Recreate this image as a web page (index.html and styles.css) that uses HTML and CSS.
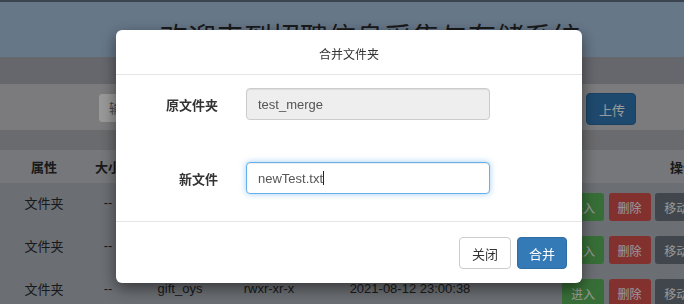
FILE: index.html
```html
<!DOCTYPE html>
<html lang="zh-CN">
<head>
    <meta charset="UTF-8">
    <meta name="viewport" content="width=device-width, initial-scale=1.0">
    <title>文件管理</title>
    <link rel="stylesheet" href="styles.css">
</head>
<body>
    <div class="top-line"></div>
    <div class="banner">
        <h1>欢迎来到招聘信息采集与存储系统</h1>
    </div>
    <div class="nav-band"></div>
    <div class="toolbar">
        <input type="text" class="search-input" placeholder="输入文件夹名称">
        <button type="button" class="btn btn-primary upload-btn">上传</button>
    </div>
    <div class="spacer"></div>
    <table class="file-table">
        <colgroup>
            <col style="width: 88px">
            <col style="width: 40px">
            <col style="width: 104px">
            <col style="width: 74px">
            <col style="width: 208px">
            <col style="width: 338px">
        </colgroup>
        <thead>
            <tr>
                <th>属性</th>
                <th>大小</th>
                <th>名称</th>
                <th>权限</th>
                <th>修改时间</th>
                <th>操作</th>
            </tr>
        </thead>
        <tbody>
            <tr>
                <td>文件夹</td>
                <td>--</td>
                <td>test_merge</td>
                <td>rwxr-xr-x</td>
                <td>2021-08-12 22:58:14</td>
                <td class="ops">
                    <button type="button" class="btn-sm btn-success">进入</button>
                    <button type="button" class="btn-sm btn-danger">删除</button>
                    <button type="button" class="btn-sm btn-secondary">移动</button>
                </td>
            </tr>
            <tr>
                <td>文件夹</td>
                <td>--</td>
                <td>data_2021</td>
                <td>rwxr-xr-x</td>
                <td>2021-08-12 22:59:40</td>
                <td class="ops">
                    <button type="button" class="btn-sm btn-success">进入</button>
                    <button type="button" class="btn-sm btn-danger">删除</button>
                    <button type="button" class="btn-sm btn-secondary">移动</button>
                </td>
            </tr>
            <tr>
                <td>文件夹</td>
                <td>--</td>
                <td>gift_oys</td>
                <td>rwxr-xr-x</td>
                <td>2021-08-12 23:00:38</td>
                <td class="ops">
                    <button type="button" class="btn-sm btn-success">进入</button>
                    <button type="button" class="btn-sm btn-danger">删除</button>
                    <button type="button" class="btn-sm btn-secondary">移动</button>
                </td>
            </tr>
        </tbody>
    </table>

    <div class="backdrop"></div>
    <div class="modal">
        <div class="modal-dialog">
            <div class="modal-header">
                <h4 class="modal-title">合并文件夹</h4>
            </div>
            <div class="modal-body">
                <div class="form-row">
                    <label for="old-name">原文件夹</label>
                    <input type="text" id="old-name" class="form-control" value="test_merge" readonly>
                </div>
                <div class="form-row">
                    <label for="new-name">新文件</label>
                    <div class="input-wrap">
                        <input type="text" id="new-name" class="form-control focused" value="newTest.txt">
                        <span class="caret"></span>
                    </div>
                </div>
            </div>
            <div class="modal-footer">
                <button type="button" class="btn btn-default">关闭</button>
                <button type="button" class="btn btn-primary">合并</button>
            </div>
        </div>
    </div>
</body>
</html>
```

FILE: styles.css
```css
/* page under the dialog */
html, body {
    margin: 0;
    padding: 0;
    height: 100%;
    overflow: hidden;
}
body {
    font-family: "Liberation Sans", "Noto Sans CJK SC", sans-serif;
    font-size: 13px;
    color: #2b2b2b;
    background-color: #b2b7be;
}
.top-line {
    height: 2px;
    background-color: #617185;
}
.banner {
    height: 55px;
    background-color: #aac6e3;
    box-sizing: border-box;
    padding: 19px 0 0 56px;
    text-align: center;
}
.banner h1 {
    margin: 0;
    font-size: 28px;
    line-height: 36px;
    font-weight: normal;
    color: #2b2b2b;
    white-space: nowrap;
}
.nav-band {
    height: 27px;
    background-color: #aaacb6;
}
.toolbar {
    height: 46px;
    box-sizing: border-box;
    padding: 9px 0 0 98px;
    display: flex;
    align-items: flex-start;
    background-color: #cdcdd2;
}
.search-input {
    width: 460px;
    height: 30px;
    box-sizing: border-box;
    padding: 0 10px;
    border: 1px solid #ccc;
    border-radius: 4px;
    font-family: inherit;
    font-size: 13px;
}
.upload-btn {
    margin-left: 28px;
    width: 50px;
    height: 30px;
    padding: 0;
    white-space: nowrap;
}
.spacer {
    height: 20px;
    background-color: #b1b2b7;
}
.file-table {
    width: 852px;
    table-layout: fixed;
    border-collapse: collapse;
}
.file-table th {
    height: 33px;
    padding: 0;
    font-weight: bold;
    background-color: #c3c6cb;
    white-space: nowrap;
}
.file-table td {
    height: 38px;
    padding: 0 0 5px;
    text-align: center;
    white-space: nowrap;
}
.file-table td.ops {
    text-align: left;
    padding: 5px 0 0 48px;
}
.btn-sm {
    width: 42px;
    height: 28px;
    margin-right: 1px;
    border: none;
    border-radius: 3px;
    color: #fff;
    font-family: inherit;
    font-size: 12px;
    vertical-align: middle;
}
.btn-success {
    background-color: #5cb85c;
}
.btn-danger {
    background-color: #d9534f;
}
.btn-secondary {
    background-color: #6c757d;
}

/* dialog */
.backdrop {
    position: fixed;
    top: 0;
    left: 0;
    right: 0;
    bottom: 0;
    background-color: rgba(0, 0, 0, 0.4);
}
.modal {
    position: fixed;
    top: 0;
    left: 0;
    right: 0;
    bottom: 0;
}
.modal-dialog {
    width: 466px;
    margin: 30px 0 0 116px;
    background-color: #fff;
    border-radius: 6px;
    box-shadow: 0 5px 15px rgba(0, 0, 0, 0.5);
}
.modal-header {
    padding: 18px 15px 12px;
    border-bottom: 1px solid #e5e5e5;
    text-align: center;
}
.modal-title {
    margin: 0;
    font-size: 12px;
    line-height: 14px;
    font-weight: normal;
    color: #333;
}
.modal-body {
    padding: 13px 0 27px;
    display: flex;
    flex-direction: column;
    gap: 42px;
}
.form-row {
    display: flex;
    align-items: center;
}
.form-row label {
    width: 102px;
    margin-right: 28px;
    text-align: right;
    font-weight: bold;
    color: #333;
}
.form-control {
    width: 244px;
    height: 32px;
    box-sizing: border-box;
    padding: 0 11px;
    border: 1px solid #ccc;
    border-radius: 4px;
    font-family: inherit;
    font-size: 13px;
    color: #555;
    background-color: #fff;
    box-shadow: inset 0 1px 1px rgba(0, 0, 0, 0.075);
    outline: none;
}
.form-control[readonly] {
    background-color: #eee;
}
.form-control.focused {
    border-color: #66afe9;
    box-shadow: inset 0 1px 1px rgba(0, 0, 0, 0.075), 0 0 6px rgba(102, 175, 233, 0.6);
}
.input-wrap {
    position: relative;
}
.caret {
    position: absolute;
    left: 77px;
    top: 9px;
    width: 1px;
    height: 14px;
    background-color: #222;
}
.modal-footer {
    padding: 15px 15px 14px;
    border-top: 1px solid #e5e5e5;
    display: flex;
    justify-content: flex-end;
    gap: 6px;
}
.btn {
    height: 32px;
    padding: 0 12px;
    border: 1px solid transparent;
    border-radius: 4px;
    font-family: inherit;
    font-size: 13px;
    cursor: pointer;
}
.modal-footer .btn-primary {
    padding: 0 11px;
}
.btn-default {
    background-color: #fff;
    border-color: #ccc;
    color: #333;
}
.btn-primary {
    background-color: #337ab7;
    border-color: #2e6da4;
    color: #fff;
}
```
